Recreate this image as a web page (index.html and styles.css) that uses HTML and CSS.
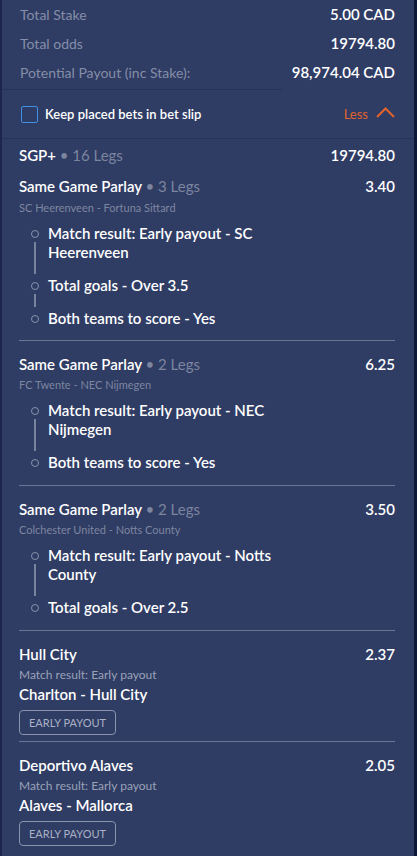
FILE: index.html
```html
<!DOCTYPE html>
<html lang="en">
<head>
  <meta charset="UTF-8" />
  <meta name="viewport" content="width=device-width, initial-scale=1.0" />
  <title>Bet Slip</title>
  <link rel="stylesheet" href="styles.css">
</head>
<body>
  <div class="slip">
    <div class="summary">
      <div class="sum-row"><span class="sum-label">Total Stake</span><span class="sum-value">5.00 CAD</span></div>
      <div class="sum-row"><span class="sum-label">Total odds</span><span class="sum-value">19794.80</span></div>
      <div class="sum-row"><span class="sum-label">Potential Payout (inc Stake):</span><span class="sum-value">98,974.04 CAD</span></div>
    </div>

    <div class="keep-row">
      <label class="keep">
        <span class="checkbox"></span>
        Keep placed bets in bet slip
      </label>
      <span class="less">Less
        <svg width="19" height="11" viewBox="0 0 19 11"><path d="M1 10 L9.5 1.5 L18 10" fill="none" stroke="#e0642c" stroke-width="2"/></svg>
      </span>
    </div>

    <div class="content">
      <div class="row sgp">
        <span>SGP+ <span class="legs">&bull; 16 Legs</span></span>
        <span class="odds">19794.80</span>
      </div>

      <div class="group first">
        <div class="row">
          <span>Same Game Parlay <span class="legs">&bull; 3 Legs</span></span>
          <span class="odds">3.40</span>
        </div>
        <div class="match">SC Heerenveen - Fortuna Sittard</div>
        <ul class="leg-list">
          <li class="leg"><span class="marker"></span><span class="leg-text">Match result: Early payout - SC Heerenveen</span></li>
          <li class="leg"><span class="marker"></span><span class="leg-text">Total goals - Over 3.5</span></li>
          <li class="leg"><span class="marker"></span><span class="leg-text">Both teams to score - Yes</span></li>
        </ul>
      </div>

      <div class="group">
        <div class="row">
          <span>Same Game Parlay <span class="legs">&bull; 2 Legs</span></span>
          <span class="odds">6.25</span>
        </div>
        <div class="match">FC Twente - NEC Nijmegen</div>
        <ul class="leg-list">
          <li class="leg"><span class="marker"></span><span class="leg-text">Match result: Early payout - NEC Nijmegen</span></li>
          <li class="leg"><span class="marker"></span><span class="leg-text">Both teams to score - Yes</span></li>
        </ul>
      </div>

      <div class="group">
        <div class="row">
          <span>Same Game Parlay <span class="legs">&bull; 2 Legs</span></span>
          <span class="odds">3.50</span>
        </div>
        <div class="match">Colchester United - Notts County</div>
        <ul class="leg-list">
          <li class="leg"><span class="marker"></span><span class="leg-text">Match result: Early payout - Notts County</span></li>
          <li class="leg"><span class="marker"></span><span class="leg-text">Total goals - Over 2.5</span></li>
        </ul>
      </div>

      <div class="single">
        <div class="row">
          <span>Hull City</span>
          <span class="odds">2.37</span>
        </div>
        <div class="market">Match result: Early payout</div>
        <div class="event">Charlton - Hull City</div>
        <span class="badge">EARLY PAYOUT</span>
      </div>

      <div class="single">
        <div class="row">
          <span>Deportivo Alaves</span>
          <span class="odds">2.05</span>
        </div>
        <div class="market">Match result: Early payout</div>
        <div class="event">Alaves - Mallorca</div>
        <span class="badge">EARLY PAYOUT</span>
      </div>
    </div>
  </div>
</body>
</html>
```

FILE: styles.css
```css
body {
  margin: 0;
  background: #0c1739;
  font-family: Lato, "Open Sans", Arial, sans-serif;
  color: #ffffff;
}
.slip {
  background: #2f3c64;
  border-left: 2px solid #1c2650;
  margin-right: 3px;
  min-height: 856px;
}
.summary {
  position: relative;
  padding: 0 19px 3px 18px;
}
.summary::after {
  content: "";
  position: absolute;
  left: 0;
  bottom: 0;
  width: 280px;
  height: 1px;
  background: #27335a;
}
.sum-row {
  display: flex;
  justify-content: space-between;
  align-items: center;
  height: 29px;
  line-height: 19px;
}
.sum-label {
  color: #858ea8;
  font-size: 14px;
}
.sum-value {
  font-size: 15px;
  font-weight: 600;
}
.keep-row {
  display: flex;
  justify-content: space-between;
  align-items: center;
  height: 48px;
  padding: 0 19px 0 19px;
  border-bottom: 1px solid #27335a;
}
.keep {
  display: flex;
  align-items: center;
  gap: 7px;
  font-size: 13px;
  font-weight: 600;
}
.checkbox {
  width: 15px;
  height: 15px;
  border: 1px solid #4190e6;
  border-radius: 2px;
}
.less {
  display: flex;
  align-items: center;
  gap: 8px;
  color: #e0642c;
  font-size: 13px;
}
.less svg {
  margin-top: -3px;
}
.content {
  padding: 0 19px 0 17px;
}
.row {
  display: flex;
  justify-content: space-between;
  font-size: 15px;
  font-weight: 600;
  line-height: 19px;
}
.legs {
  color: #7c859f;
  font-weight: 400;
}
.odds {
  font-weight: 600;
}
.sgp {
  padding-top: 7px;
}
.group {
  border-top: 1px solid #6b7594;
  padding: 14px 0 13px;
}
.group.first {
  border-top: none;
  padding-top: 12px;
  padding-bottom: 12px;
}
.match {
  color: #7d86a0;
  font-size: 11px;
  line-height: 14px;
  margin-top: 4px;
}
.group.first .match {
  margin-top: 5px;
}
.leg-list {
  list-style: none;
  margin: 9px 0 0;
  padding: 0 0 0 12px;
}
.leg {
  display: flex;
  gap: 9px;
  padding-bottom: 14px;
}
.leg:last-child {
  padding-bottom: 0;
}
.marker {
  display: flex;
  flex-direction: column;
  align-items: center;
  width: 8px;
  flex: none;
  padding-top: 6px;
  margin-bottom: -12px;
}
.marker::before {
  content: "";
  width: 6px;
  height: 6px;
  border: 1px solid #8a93ab;
  border-radius: 50%;
}
.marker::after {
  content: "";
  flex: 1;
  width: 2px;
  margin-top: 4px;
  background: #7a839e;
}
.leg:last-child .marker::after {
  display: none;
}
.leg-text {
  font-size: 15px;
  font-weight: 600;
  line-height: 19px;
  width: 230px;
}
.single {
  border-top: 1px solid #6b7594;
  padding: 14px 0 6px;
}
.market {
  color: #9aa2b8;
  font-size: 12px;
  line-height: 16px;
  margin-top: 3px;
}
.event {
  font-size: 15px;
  font-weight: 600;
  line-height: 19px;
  margin-top: 2px;
}
.badge {
  display: inline-block;
  margin-top: 6px;
  padding: 0 9px;
  height: 23px;
  line-height: 23px;
  border: 1px solid #8a93ab;
  border-radius: 4px;
  color: #aab1c4;
  font-size: 11px;
}
```
